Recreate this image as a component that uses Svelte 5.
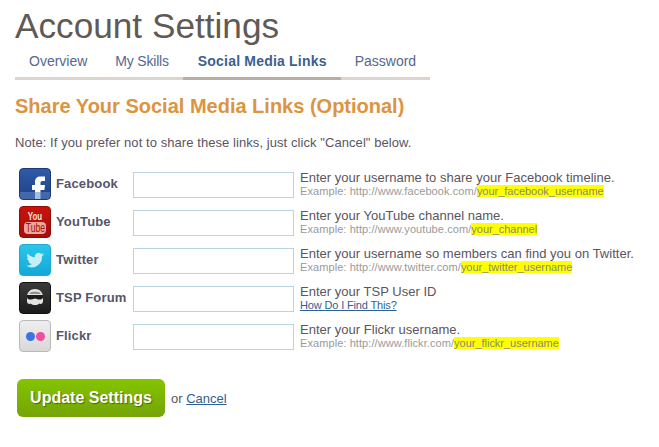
<script lang="ts">
    const tabs = [
        { label: "Overview" },
        { label: "My Skills" },
        { label: "Social Media Links", active: true },
        { label: "Password" },
    ];

    const rows = [
        { id: "fb", name: "Facebook", help: "Enter your username to share your Facebook timeline.", base: "http://www.facebook.com/", mark: "your_facebook_username" },
        { id: "yt", name: "YouTube", help: "Enter your YouTube channel name.", base: "http://www.youtube.com/", mark: "your_channel" },
        { id: "tw", name: "Twitter", help: "Enter your username so members can find you on Twitter.", base: "http://www.twitter.com/", mark: "your_twitter_username" },
        { id: "tsp", name: "TSP Forum", help: "Enter your TSP User ID", link: "How Do I Find This?" },
        { id: "fl", name: "Flickr", help: "Enter your Flickr username.", base: "http://www.flickr.com/", mark: "your_flickr_username" },
    ];
</script>

<div class="page">
    <h1>Account Settings</h1>
    <nav class="tabs">
        {#each tabs as tab}
            <a href="#tab" class="tab" class:active={tab.active}>{tab.label}</a>
        {/each}
    </nav>

    <h2>Share Your Social Media Links (Optional)</h2>
    <p class="note">Note: If you prefer not to share these links, just click "Cancel" below.</p>

    <div class="rows">
        {#each rows as row}
            <div class="row">
                <span class="icon {row.id}">
                    {#if row.id === "fb"}
                        <svg viewBox="0 0 32 32" width="32" height="32">
                            <path d="M16 32V22h-3v-5h3v-3c0-3.500 2-5.500 5.500-5.500H26v4.500h-2.500c-1.500 0-2 .7-2 2V17H26l-.6 5h-3.900v10z" fill="#fff" />
                            <rect x="1" y="24" width="30" height="8" fill="#5f86c4" opacity=".55" />
                        </svg>
                    {:else if row.id === "yt"}
                        <span class="yt-you">You</span>
                        <span class="yt-tube"><span>Tube</span></span>
                    {:else if row.id === "tw"}
                        <svg viewBox="0 0 32 32" width="32" height="32">
                            <path d="M25 10.500c-.7.300-1.400.5-2.100.6.700-.5 1.300-1.100 1.600-2-.7.400-1.500.7-2.300.9a3.600 3.600 0 0 0-6.200 3.300c-3-.2-5.600-1.500-7.400-3.800-1 1.600-.5 3.700 1.100 4.800-.6 0-1.100-.2-1.600-.5 0 1.800 1.200 3.300 2.900 3.700-.5.100-1.100.2-1.600.1.500 1.400 1.800 2.500 3.400 2.500A7.200 7.200 0 0 1 7 21.600 10.300 10.300 0 0 0 23 12.300c.8-.5 1.400-1 2-1.800z" fill="#c8eef9" />
                        </svg>
                    {:else if row.id === "tsp"}
                        <svg viewBox="0 0 32 32" width="32" height="32">
                            <path d="M16 7c-4.700 0-8 3.300-8 8v4c0 1.800 1 3 2.500 3 .5 0 1-.2 1.200-.5 1 1 2.600 1.500 4.300 1.500s3.300-.5 4.300-1.500c.2.300.7.500 1.200.5 1.500 0 2.500-1.200 2.500-3v-4c0-4.700-3.300-8-8-8z" fill="#e4e4e2" />
                            <path d="M8 13h16v2c0 1.500-1 2.500-2.500 2.500h-2c-1.500 0-2-1-3.500-1s-2 1-3.500 1h-2C9 17.500 8 16.500 8 15z" fill="#1c1c1c" />
                            <path d="M10.500 11c2-1.800 9-1.800 11 0v1h-11z" fill="#8f8f8d" />
                        </svg>
                    {:else}
                        <span class="dot blue"></span>
                        <span class="dot pink"></span>
                    {/if}
                </span>
                <span class="name">{row.name}</span>
                <input class="field" type="text" aria-label={row.name} />
                <div class="help">
                    <div class="help-main">{row.help}</div>
                    {#if row.link}
                        <a href="#find" class="find">{row.link}</a>
                    {:else}
                        <div class="example">Example: {row.base}<mark>{row.mark}</mark></div>
                    {/if}
                </div>
            </div>
        {/each}
    </div>

    <div class="actions">
        <button type="button" class="update">Update Settings</button>
        <span class="or">or <a href="#cancel">Cancel</a></span>
    </div>
</div>

<style>
    :global(body) {
        margin: 0;
        background: #fff;
        font-family: "Liberation Sans", Arial, sans-serif;
    }
    .page {
        padding: 6px 0 0 15px;
        width: 644px;
        box-sizing: border-box;
        color: #5a5560;
    }
    h1 {
        margin: 0;
        font-size: 35.2px;
        line-height: 40px;
        font-weight: normal;
        color: #5f5a54;
    }
    .tabs {
        display: flex;
        width: 415px;
        margin-top: 2px;
        border-bottom: 3px solid #dcd5cf;
        height: 29px;
    }
    .tab {
        flex: none;
        padding: 5px 14px 0;
        margin-bottom: -3px;
        font-size: 14px;
        line-height: 16px;
        white-space: nowrap;
        color: #56688f;
        text-decoration: none;
        border-bottom: 3px solid transparent;
    }
    .tab:nth-child(2) {
        letter-spacing: -.2px;
    }
    .tab.active {
        padding-left: 15px;
        font-weight: bold;
        letter-spacing: .2px;
        color: #3b5f91;
        border-bottom-color: #b8aea4;
    }
    h2 {
        margin: 15px 0 0;
        font-size: 20px;
        line-height: 23px;
        font-weight: bold;
        color: #dc9440;
    }
    .note {
        margin: 18px 0 0;
        font-size: 13px;
        letter-spacing: .07px;
        line-height: 14px;
    }
    .rows {
        margin-top: 18px;
        padding-left: 4px;
        display: flex;
        flex-direction: column;
        gap: 6px;
    }
    .row {
        display: flex;
        align-items: center;
        height: 32px;
    }
    .icon {
        position: relative;
        flex: none;
        display: flex;
        flex-direction: column;
        align-items: center;
        justify-content: center;
        width: 32px;
        height: 32px;
        border-radius: 4px;
        overflow: hidden;
        box-sizing: border-box;
    }
    .icon svg {
        display: block;
    }
    .fb {
        background: linear-gradient(#2f5ba6, #1f4187);
        border: 1px solid #1d3a78;
    }
    .fb svg, .tw svg, .tsp svg {
        margin: -1px;
        flex: none;
    }
    .yt {
        background: linear-gradient(#c8130c, #a80d08);
        border: 1px solid #8f0c08;
    }
    .yt-you {
        font-size: 11px;
        line-height: 10px;
        font-weight: bold;
        color: #f6e4df;
        transform: scaleX(.72);
    }
    .yt-tube {
        display: flex;
        justify-content: center;
        width: 22px;
        height: 12px;
        margin-top: 1px;
        background: #eca79c;
        border-radius: 4px;
        font-size: 12px;
        line-height: 12px;
        white-space: nowrap;
        color: #a80d08;
    }
    .yt-tube span {
        transform: scaleX(.72);
    }
    .tw {
        background: linear-gradient(#2bc6ea, #12a8d8);
        border: 1px solid #22a9cf;
    }
    .tsp {
        background: linear-gradient(#3a3a3a, #1c1c1c);
        border: 1px solid #111;
    }
    .fl {
        flex-direction: row;
        gap: 1px;
        background: linear-gradient(#efefef, #d8d8d8);
        border: 1px solid #b9b9b9;
    }
    .dot {
        width: 9px;
        height: 9px;
        border-radius: 50%;
    }
    .dot.blue {
        background: #3c73e0;
    }
    .dot.pink {
        background: #ef4f9f;
    }
    .name {
        flex: none;
        width: 82px;
        padding: 0 0 2px 5px;
        box-sizing: border-box;
        font-size: 13px;
        font-weight: bold;
        letter-spacing: .15px;
        color: #56556a;
    }
    .field {
        flex: none;
        width: 161px;
        height: 26px;
        margin: 2px 0 0;
        padding: 0;
        box-sizing: border-box;
        border: 1px solid #b9d5e2;
        background: #fff;
        outline: none;
    }
    .help {
        margin-left: 6px;
    }
    .help-main {
        font-size: 13px;
        letter-spacing: .02px;
        line-height: 14px;
    }
    .example, .find {
        display: block;
        font-size: 11px;
        line-height: 13px;
    }
    .example {
        letter-spacing: .08px;
        color: #9a9a9a;
    }
    mark {
        letter-spacing: -.02px;
        background: #ffff00;
        color: #8a8a70;
    }
    .find {
        letter-spacing: -.15px;
        color: #2f5f95;
    }
    .actions {
        display: flex;
        align-items: center;
        margin-top: 27px;
        padding-left: 2px;
    }
    .update {
        width: 148px;
        height: 38px;
        padding: 0;
        border: none;
        border-radius: 6px;
        background: linear-gradient(#85c400, #74a406);
        font-family: inherit;
        font-size: 16px;
        font-weight: bold;
        color: #fff;
        text-shadow: 1px 1px 1px #4c6a00;
    }
    .or {
        margin-left: 6px;
        font-size: 13px;
    }
    .or a {
        color: #2f5f95;
    }
</style>
